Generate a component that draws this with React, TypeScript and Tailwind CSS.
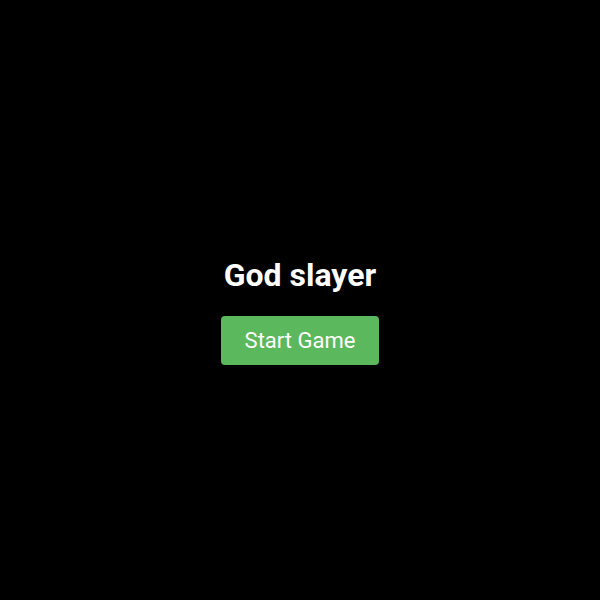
export default function App() {
  return (
    <div
      className="flex h-screen w-full flex-col items-center justify-center bg-black"
      style={{ fontFamily: "Roboto, 'Liberation Sans', sans-serif" }}
    >
      <h1 className="my-6 text-[32px] leading-[33px] font-bold text-white">God slayer</h1>
      <button className="rounded bg-[#5cb85c] px-6 py-3 text-[22px] leading-[25px] text-white">
        Start Game
      </button>
    </div>
  );
}
